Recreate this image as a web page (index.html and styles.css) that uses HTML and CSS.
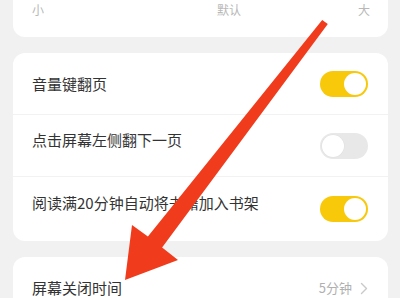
FILE: index.html
```html
<!DOCTYPE html>
<html lang="zh">
<head>
<meta charset="utf-8">
<link rel="stylesheet" href="styles.css">
</head>
<body>
<div class="page">
  <div class="card card-top">
    <div class="scale">
      <span class="scale-min">小</span>
      <span class="scale-mid">默认</span>
      <span class="scale-max">大</span>
    </div>
  </div>

  <div class="card">
    <div class="row">
      <span class="label">音量键翻页</span>
      <span class="toggle on"><span class="knob"></span></span>
    </div>
    <div class="row row-lift">
      <span class="label">点击屏幕左侧翻下一页</span>
      <span class="toggle off"><span class="knob"></span></span>
    </div>
    <div class="row row-lift row-last">
      <span class="label">阅读满20分钟自动将书籍加入书架</span>
      <span class="toggle on"><span class="knob"></span></span>
    </div>
  </div>

  <div class="card">
    <div class="row">
      <span class="label">屏幕关闭时间</span>
      <span class="value">5分钟
        <svg class="chev" width="8" height="13" viewBox="0 0 8 13"><path d="M1.5 1.5 L6.5 6.5 L1.5 11.5" fill="none" stroke="#c9c9c9" stroke-width="1.4" stroke-linecap="round" stroke-linejoin="round"/></svg>
      </span>
    </div>
  </div>
</div>

<svg class="arrow" width="400" height="298" viewBox="0 0 400 298">
  <polygon points="322.2,19.9 327.8,24.1 162.1,247.5 178,260 125,280 132,225 147.9,236.5" fill="#f03c1c"/>
</svg>
</body>
</html>
```

FILE: styles.css
```css
html, body {
  margin: 0;
  padding: 0;
  background: #f1f1f1;
  width: 400px;
  height: 298px;
  overflow: hidden;
  font-family: "Noto Sans CJK SC", "Noto Sans", sans-serif;
}

.page {
  padding: 0 12px 0 13px;
  display: flex;
  flex-direction: column;
  gap: 16px;
}

.card {
  background: #ffffff;
  border-radius: 12px;
}

.card-top {
  margin-top: -12px;
  height: 49px;
  box-sizing: border-box;
  padding: 14px 18px 0 19px;
}

.scale {
  display: flex;
  align-items: center;
  height: 16px;
  font-size: 12px;
  line-height: 16px;
  color: #b8b8b8;
}

.scale-mid {
  margin-left: auto;
  margin-right: 117px;
}

.row {
  height: 62px;
  display: flex;
  align-items: center;
  justify-content: space-between;
  padding: 0 20px 0 19px;
  border-bottom: 1px solid #f2f2f2;
  box-sizing: border-box;
}

.row-last {
  height: 64px;
  border-bottom: none;
}

.card > .row:only-child {
  border-bottom: none;
}

.label {
  font-size: 15px;
  color: #333333;
  line-height: 20px;
}

.row-lift .label {
  margin-bottom: 12px;
}

.toggle {
  width: 48px;
  height: 26px;
  border-radius: 13px;
  box-sizing: border-box;
  padding: 2px;
  display: flex;
}

.toggle.on {
  background: #f8c80a;
  justify-content: flex-end;
}

.toggle.off {
  background: #e8e8e8;
  justify-content: flex-start;
}

.knob {
  width: 22px;
  height: 22px;
  border-radius: 50%;
  background: #ffffff;
}

.toggle.off .knob {
  box-shadow: 0 0 0 0.5px #e0e0e0;
}

.value {
  font-size: 13px;
  color: #b0b0b0;
  display: flex;
  align-items: center;
  gap: 8px;
  line-height: 18px;
}

.arrow {
  position: absolute;
  left: 0;
  top: 0;
  pointer-events: none;
}
```
